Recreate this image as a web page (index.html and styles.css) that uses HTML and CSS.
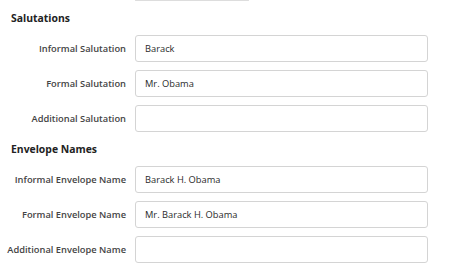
FILE: index.html
```html
<!DOCTYPE html>
<html>
<head>
<meta charset="utf-8">
<link rel="stylesheet" href="styles.css">
</head>
<body>
<div class="page">
  <div class="stub-row"><div class="stub"></div></div>
  <h3 class="section-title">Salutations</h3>
  <div class="fields">
    <label class="label">Informal Salutation</label>
    <div class="input">Barack</div>
    <label class="label">Formal Salutation</label>
    <div class="input">Mr. Obama</div>
    <label class="label">Additional Salutation</label>
    <div class="input"></div>
  </div>
  <h3 class="section-title">Envelope Names</h3>
  <div class="fields">
    <label class="label">Informal Envelope Name</label>
    <div class="input">Barack H. Obama</div>
    <label class="label">Formal Envelope Name</label>
    <div class="input">Mr. Barack H. Obama</div>
    <label class="label">Additional Envelope Name</label>
    <div class="input"></div>
  </div>
</div>
</body>
</html>
```
FILE: styles.css
```css
html, body {
  margin: 0;
  padding: 0;
  background: #fff;
}
.page {
  font-family: "Open Sans", "Noto Sans", sans-serif;
  color: #333;
  width: 450px;
  height: 278px;
  overflow: hidden;
}
.stub-row {
  padding-left: 135px;
}
.stub {
  width: 112px;
  height: 0;
  border: 1px solid #ddd;
  border-top: none;
  border-radius: 0 0 3px 3px;
}
.section-title {
  margin: 10px 0 10px 11px;
  font-size: 10.4px;
  line-height: 14px;
  font-weight: 700;
  color: #222;
}
.fields {
  display: grid;
  grid-template-columns: 126px 293px;
  column-gap: 9px;
  row-gap: 8px;
}
.label {
  display: flex;
  align-items: center;
  justify-content: flex-end;
  font-size: 9.3px;
  font-weight: 600;
  color: #444;
}
.input {
  box-sizing: border-box;
  height: 27px;
  border: 1px solid #d4d4d4;
  border-radius: 3px;
  padding: 0 9px;
  display: flex;
  align-items: center;
  font-size: 9.3px;
  color: #2a2a2a;
}
```
